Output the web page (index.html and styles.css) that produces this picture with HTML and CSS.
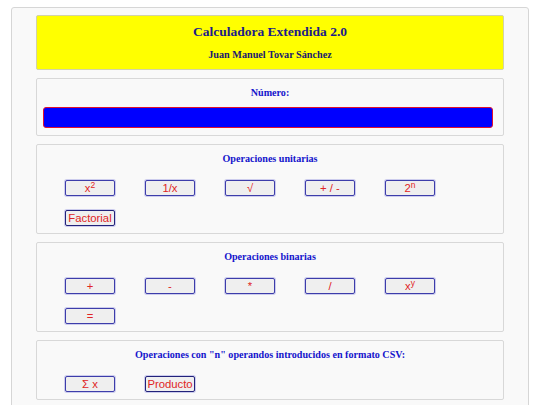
FILE: index.html
```html
<!DOCTYPE html>
<html lang="es">
<head>
<meta charset="utf-8">
<title>Calculadora Extendida 2.0</title>
<link rel="stylesheet" href="styles.css">
</head>
<body>
<main class="page">
  <header class="banner">
    <h1 class="banner-title">Calculadora Extendida 2.0</h1>
    <p class="banner-author">Juan Manuel Tovar Sánchez</p>
  </header>

  <section class="panel">
    <h2 class="panel-title">Número:</h2>
    <input class="display" type="text" aria-label="Número">
  </section>

  <section class="panel">
    <h2 class="panel-title">Operaciones unitarias</h2>
    <div class="keys">
      <button class="key">x<sup>2</sup></button>
      <button class="key">1/x</button>
      <button class="key">√</button>
      <button class="key">+ / -</button>
      <button class="key">2<sup>n</sup></button>
      <button class="key key-dark">Factorial</button>
    </div>
  </section>

  <section class="panel">
    <h2 class="panel-title">Operaciones binarias</h2>
    <div class="keys">
      <button class="key">+</button>
      <button class="key">-</button>
      <button class="key">*</button>
      <button class="key">/</button>
      <button class="key">x<sup>y</sup></button>
      <button class="key">=</button>
    </div>
  </section>

  <section class="panel">
    <h2 class="panel-title">Operaciones con "n" operandos introducidos en formato CSV:</h2>
    <div class="keys">
      <button class="key">Σ x</button>
      <button class="key key-dark">Producto</button>
    </div>
  </section>
</main>
</body>
</html>
```

FILE: styles.css
```css
html, body {
  margin: 0;
  padding: 0;
  background: #ffffff;
}

.page {
  box-sizing: border-box;
  width: 518px;
  margin: 7px auto 0;
  padding: 7px 24px 12px;
  background: #f9f9f9;
  border: 1px solid #d6d6d6;
  border-radius: 3px;
  font-family: "Liberation Serif", "Times New Roman", serif;
}

.banner {
  background: #ffff00;
  border: 1px solid #d2d2a8;
  border-radius: 2px;
  padding: 6px 8px 7px;
  text-align: center;
}

.banner-title {
  margin: 0;
  font-size: 13.5px;
  line-height: 20px;
  font-weight: bold;
  color: #1c1c8a;
}

.banner-author {
  margin: 6px 0 0;
  font-size: 10.2px;
  line-height: 14px;
  font-weight: bold;
  color: #191970;
}

.panel {
  margin-top: 8px;
  background: #f9f9f9;
  border: 1px solid #d8d8d8;
  border-radius: 2px;
  padding: 7px 6px 7px;
}

.panel-title {
  margin: 0;
  font-size: 10.1px;
  line-height: 13px;
  font-weight: bold;
  text-align: center;
  color: #1414cc;
}

.display {
  display: block;
  box-sizing: border-box;
  width: 450px;
  height: 21px;
  margin: 8px 0 0;
  padding: 0 4px;
  background: #0000ff;
  border: 1px solid #e01030;
  border-radius: 3px;
}

.keys {
  display: grid;
  grid-template-columns: repeat(5, 50px);
  column-gap: 30px;
  row-gap: 14px;
  margin-top: 15px;
  padding-left: 22px;
}

.key {
  box-sizing: border-box;
  width: 50px;
  height: 16px;
  padding: 0;
  background: #efefef;
  border: 1px solid #3d3daa;
  border-radius: 2px;
  box-shadow: 0 0 0 1px rgba(100, 100, 210, 0.3);
  font-family: "Liberation Sans", Arial, sans-serif;
  font-size: 11.3px;
  line-height: 14px;
  color: #e02525;
}

.key-dark {
  border-color: #22227a;
}

.key sup {
  font-size: 8.5px;
  line-height: 0;
  vertical-align: 4px;
}
```
